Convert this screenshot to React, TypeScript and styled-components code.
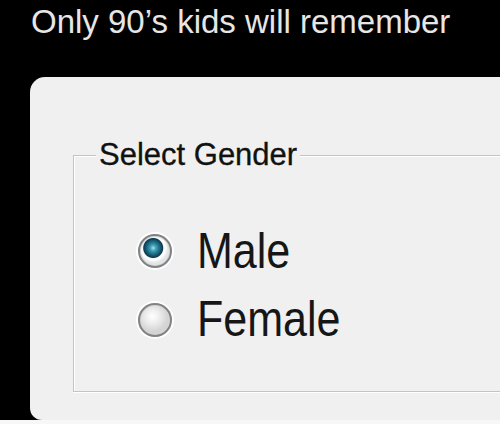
import React, { useState } from 'react'
import styled, { createGlobalStyle } from 'styled-components'

const GlobalStyle = createGlobalStyle`
  html, body {
    margin: 0;
    padding: 0;
    background: #f7f7f7;
    overflow: hidden;
  }
  #root {
    width: 500px;
  }
`

const Screen = styled.div`
  height: 420px;
  background: #000;
  display: flex;
  flex-direction: column;
`

const Caption = styled.div`
  margin: 5px 0 0 31px;
  font-family: 'Liberation Sans', Arial, sans-serif;
  font-size: 33px;
  line-height: 33px;
  color: #e6e6e6;
  white-space: nowrap;
`

const Dialog = styled.div`
  flex: 1;
  margin: 39px 0 0 30px;
  background: #f0f0f0;
  border-radius: 15px 0 0 12px;
  padding: 60px 0 27px 43px;
  display: flex;
  flex-direction: column;
`

const GroupBox = styled.fieldset`
  margin: 0;
  padding: 0 0 47px 0;
  border: 1px solid #c4c4c4;
  border-right: none;
  box-shadow: inset 1px 1px 0 #fff, 0 1px 0 #fff;
`

const Legend = styled.legend`
  margin-left: 22px;
  padding: 0 3px;
  background: #f0f0f0;
  font-family: 'Liberation Sans', Tahoma, sans-serif;
  font-size: 31px;
  color: #111;
  -webkit-text-stroke: 0.3px #111;
`

const OptionList = styled.div`
  margin-top: 53px;
  padding-left: 64px;
  display: flex;
  flex-direction: column;
  gap: 18px;
`

const Option = styled.label`
  display: flex;
  align-items: center;
  height: 50px;
  cursor: default;
`

const HiddenInput = styled.input`
  position: absolute;
  opacity: 0;
  width: 0;
  height: 0;
`

const RadioMark = styled.span<{ checked: boolean; drop: number }>`
  flex: none;
  width: 30px;
  height: 30px;
  margin-top: ${p => p.drop * 2}px;
  border-radius: 50%;
  border: 2px solid #808284;
  box-shadow: 0 0 0 2px rgba(255, 255, 255, 0.9), inset 0 0 0 1px #d2d5d7;
  background: ${p =>
    p.checked
      ? 'radial-gradient(circle at 44% 40%, #9fe3ee 0, #3c9db3 3px, #176079 7px, #0e3a4e 9.5px, #f4f6f7 10.5px, #ffffff 12px, #e2e4e6 15px)'
      : 'radial-gradient(circle at 42% 38%, #ffffff 0, #f3f3f3 5px, #e4e4e4 10px, #d4d4d4 15px)'};
`

const OptionText = styled.span`
  margin-left: 25px;
  font-family: 'Liberation Sans', Arial, sans-serif;
  font-size: 50px;
  line-height: 50px;
  color: #161616;
  display: inline-block;
  transform: scaleX(0.86);
  transform-origin: left center;
  white-space: nowrap;
`

const options = ['Male', 'Female']

export default function App() {
  const [gender, setGender] = useState('Male')

  return (
    <>
      <GlobalStyle />
      <Screen>
        <Caption>Only 90’s kids will remember</Caption>
        <Dialog>
          <GroupBox>
            <Legend>Select Gender</Legend>
            <OptionList>
              {options.map((opt, i) => (
                <Option key={opt}>
                  <HiddenInput
                    type="radio"
                    name="gender"
                    value={opt}
                    checked={gender === opt}
                    onChange={() => setGender(opt)}
                  />
                  <RadioMark checked={gender === opt} drop={i} />
                  <OptionText>{opt}</OptionText>
                </Option>
              ))}
            </OptionList>
          </GroupBox>
        </Dialog>
      </Screen>
    </>
  )
}
